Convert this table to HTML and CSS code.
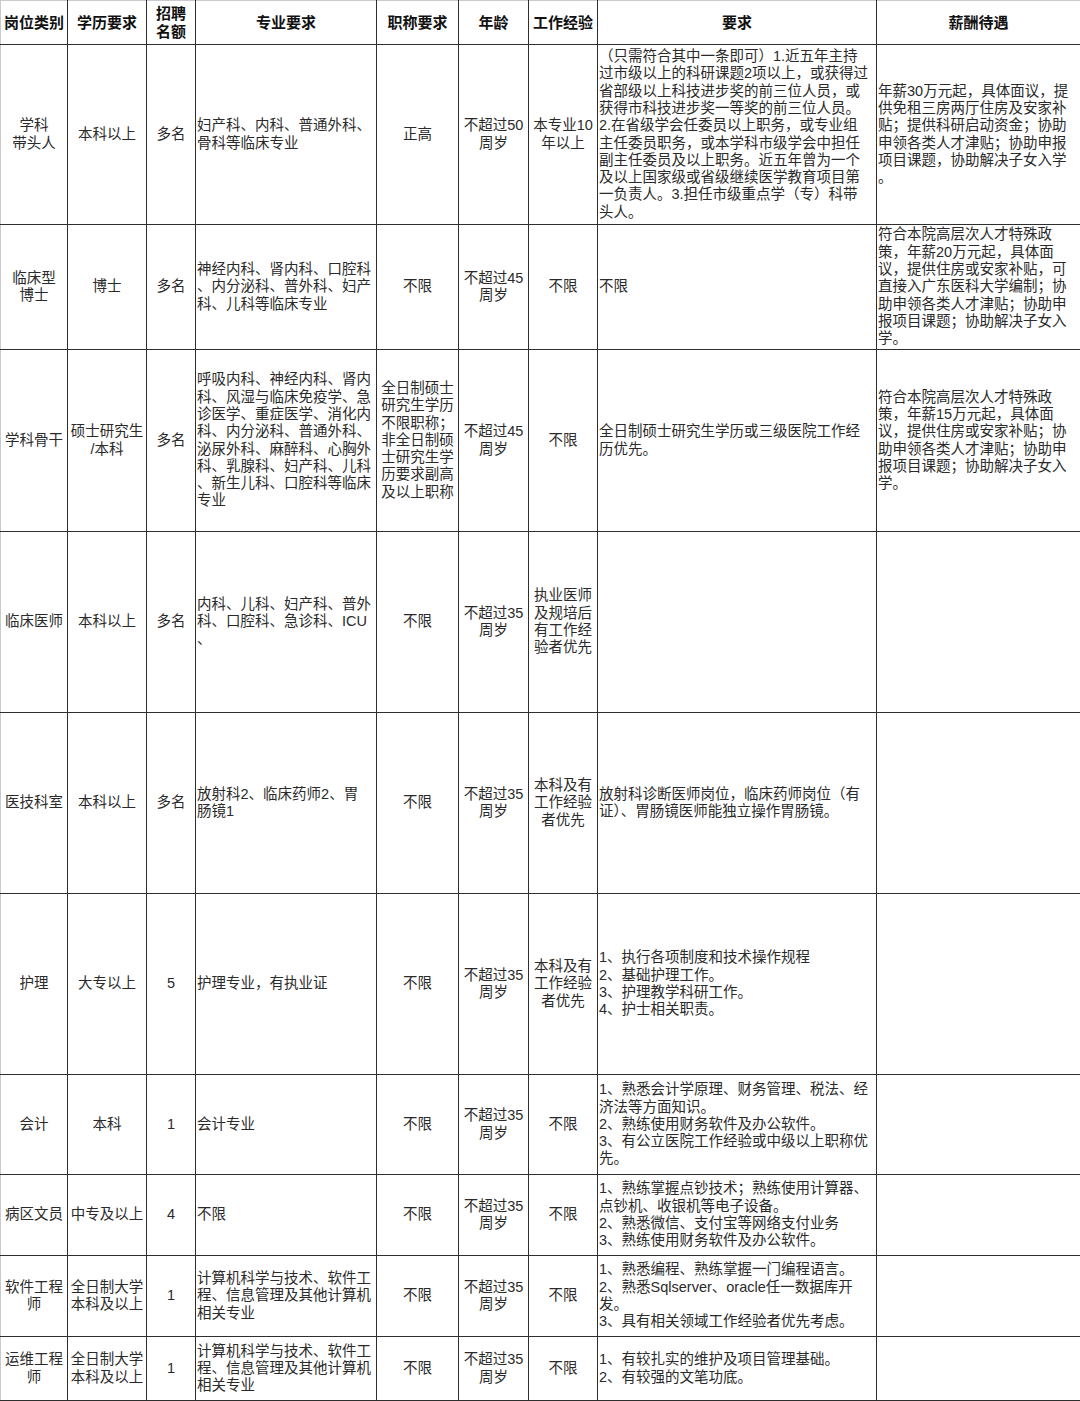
FILE: index.html
```html
<!DOCTYPE html>
<html lang="zh-CN">
<head>
<meta charset="utf-8">
<title>招聘岗位</title>
<link rel="stylesheet" href="styles.css">
</head>
<body>
<table class="jobs">
  <colgroup>
    <col class="c1"><col class="c2"><col class="c3"><col class="c4"><col class="c5"><col class="c6"><col class="c7"><col class="c8"><col class="c9">
  </colgroup>
  <thead>
    <tr class="h-head">
      <th>岗位类别</th><th>学历要求</th><th>招聘<br>名额</th><th>专业要求</th><th>职称要求</th><th>年龄</th><th>工作经验</th><th>要求</th><th>薪酬待遇</th>
    </tr>
  </thead>
  <tbody>
    <tr class="h-r1">
      <td class="ctr">学科<br>带头人</td>
      <td class="ctr">本科以上</td>
      <td class="ctr">多名</td>
      <td class="lft">妇产科、内科、普通外科、<br>骨科等临床专业</td>
      <td class="ctr">正高</td>
      <td class="ctr">不超过50<br>周岁</td>
      <td class="ctr">本专业10<br>年以上</td>
      <td class="lft">（只需符合其中一条即可）1.近五年主持<br>过市级以上的科研课题2项以上，或获得过<br>省部级以上科技进步奖的前三位人员，或<br>获得市科技进步奖一等奖的前三位人员。<br>2.在省级学会任委员以上职务，或专业组<br>主任委员职务，或本学科市级学会中担任<br>副主任委员及以上职务。近五年曾为一个<br>及以上国家级或省级继续医学教育项目第<br>一负责人。3.担任市级重点学（专）科带<br>头人。</td>
      <td class="lft">年薪30万元起，具体面议，提<br>供免租三房两厅住房及安家补<br>贴；提供科研启动资金；协助<br>申领各类人才津贴；协助申报<br>项目课题，协助解决子女入学<br>。</td>
    </tr>
    <tr class="h-r2">
      <td class="ctr">临床型<br>博士</td>
      <td class="ctr">博士</td>
      <td class="ctr">多名</td>
      <td class="lft">神经内科、肾内科、口腔科<br>、内分泌科、普外科、妇产<br>科、儿科等临床专业</td>
      <td class="ctr">不限</td>
      <td class="ctr">不超过45<br>周岁</td>
      <td class="ctr">不限</td>
      <td class="lft">不限</td>
      <td class="lft">符合本院高层次人才特殊政<br>策，年薪20万元起，具体面<br>议，提供住房或安家补贴，可<br>直接入广东医科大学编制；协<br>助申领各类人才津贴；协助申<br>报项目课题；协助解决子女入<br>学。</td>
    </tr>
    <tr class="h-r3">
      <td class="ctr">学科骨干</td>
      <td class="ctr">硕士研究生<br>/本科</td>
      <td class="ctr">多名</td>
      <td class="lft">呼吸内科、神经内科、肾内<br>科、风湿与临床免疫学、急<br>诊医学、重症医学、消化内<br>科、内分泌科、普通外科、<br>泌尿外科、麻醉科、心胸外<br>科、乳腺科、妇产科、儿科<br>、新生儿科、口腔科等临床<br>专业</td>
      <td class="ctr">全日制硕士<br>研究生学历<br>不限职称；<br>非全日制硕<br>士研究生学<br>历要求副高<br>及以上职称</td>
      <td class="ctr">不超过45<br>周岁</td>
      <td class="ctr">不限</td>
      <td class="lft">全日制硕士研究生学历或三级医院工作经<br>历优先。</td>
      <td class="lft">符合本院高层次人才特殊政<br>策，年薪15万元起，具体面<br>议，提供住房或安家补贴；协<br>助申领各类人才津贴；协助申<br>报项目课题；协助解决子女入<br>学。</td>
    </tr>
    <tr class="h-r4">
      <td class="ctr">临床医师</td>
      <td class="ctr">本科以上</td>
      <td class="ctr">多名</td>
      <td class="lft">内科、儿科、妇产科、普外<br>科、口腔科、急诊科、ICU<br>、</td>
      <td class="ctr">不限</td>
      <td class="ctr">不超过35<br>周岁</td>
      <td class="ctr">执业医师<br>及规培后<br>有工作经<br>验者优先</td>
      <td class="lft"></td>
      <td class="lft"></td>
    </tr>
    <tr class="h-r5">
      <td class="ctr">医技科室</td>
      <td class="ctr">本科以上</td>
      <td class="ctr">多名</td>
      <td class="lft">放射科2、临床药师2、胃<br>肠镜1</td>
      <td class="ctr">不限</td>
      <td class="ctr">不超过35<br>周岁</td>
      <td class="ctr">本科及有<br>工作经验<br>者优先</td>
      <td class="lft">放射科诊断医师岗位，临床药师岗位（有<br>证）、胃肠镜医师能独立操作胃肠镜。</td>
      <td class="lft"></td>
    </tr>
    <tr class="h-r6">
      <td class="ctr">护理</td>
      <td class="ctr">大专以上</td>
      <td class="ctr">5</td>
      <td class="lft">护理专业，有执业证</td>
      <td class="ctr">不限</td>
      <td class="ctr">不超过35<br>周岁</td>
      <td class="ctr">本科及有<br>工作经验<br>者优先</td>
      <td class="lft">1、执行各项制度和技术操作规程<br>2、基础护理工作。<br>3、护理教学科研工作。<br>4、护士相关职责。</td>
      <td class="lft"></td>
    </tr>
    <tr class="h-r7">
      <td class="ctr">会计</td>
      <td class="ctr">本科</td>
      <td class="ctr">1</td>
      <td class="lft">会计专业</td>
      <td class="ctr">不限</td>
      <td class="ctr">不超过35<br>周岁</td>
      <td class="ctr">不限</td>
      <td class="lft">1、熟悉会计学原理、财务管理、税法、经<br>济法等方面知识。<br>2、熟练使用财务软件及办公软件。<br>3、有公立医院工作经验或中级以上职称优<br>先。</td>
      <td class="lft"></td>
    </tr>
    <tr class="h-r8">
      <td class="ctr">病区文员</td>
      <td class="ctr">中专及以上</td>
      <td class="ctr">4</td>
      <td class="lft">不限</td>
      <td class="ctr">不限</td>
      <td class="ctr">不超过35<br>周岁</td>
      <td class="ctr">不限</td>
      <td class="lft">1、熟练掌握点钞技术；熟练使用计算器、<br>点钞机、收银机等电子设备。<br>2、熟悉微信、支付宝等网络支付业务<br>3、熟练使用财务软件及办公软件。</td>
      <td class="lft"></td>
    </tr>
    <tr class="h-r9">
      <td class="ctr">软件工程<br>师</td>
      <td class="ctr">全日制大学<br>本科及以上</td>
      <td class="ctr">1</td>
      <td class="lft">计算机科学与技术、软件工<br>程、信息管理及其他计算机<br>相关专业</td>
      <td class="ctr">不限</td>
      <td class="ctr">不超过35<br>周岁</td>
      <td class="ctr">不限</td>
      <td class="lft">1、熟悉编程、熟练掌握一门编程语言。<br>2、熟悉Sqlserver、oracle任一数据库开<br>发。<br>3、具有相关领域工作经验者优先考虑。</td>
      <td class="lft"></td>
    </tr>
    <tr class="h-r10">
      <td class="ctr">运维工程<br>师</td>
      <td class="ctr">全日制大学<br>本科及以上</td>
      <td class="ctr">1</td>
      <td class="lft">计算机科学与技术、软件工<br>程、信息管理及其他计算机<br>相关专业</td>
      <td class="ctr">不限</td>
      <td class="ctr">不超过35<br>周岁</td>
      <td class="ctr">不限</td>
      <td class="lft">1、有较扎实的维护及项目管理基础。<br>2、有较强的文笔功底。</td>
      <td class="lft"></td>
    </tr>
  </tbody>
</table>
</body>
</html>
```

FILE: styles.css
```css
html, body {
  margin: 0;
  padding: 0;
  background: #ffffff;
}

.jobs {
  width: 1080px;
  table-layout: fixed;
  border-collapse: collapse;
  font-family: "Liberation Sans", "Noto Sans CJK SC", sans-serif;
  font-size: 14.5px;
  line-height: 17.3px;
  color: #2a2a2a;
  border-top: 1px solid #c9c9cf;
  border-left: 1px solid #c9c9cf;
  border-right: 1px solid #8a8a8a;
  border-bottom: 1px solid #222;
}

.c1 { width: 67px; }
.c2 { width: 79px; }
.c3 { width: 49px; }
.c4 { width: 181px; }
.c5 { width: 82px; }
.c6 { width: 70px; }
.c7 { width: 69px; }
.c8 { width: 279px; }
.c9 { width: 204px; }

.jobs th,
.jobs td {
  border: 1px solid #2e2e2e;
  padding: 0 1px;
  vertical-align: middle;
  overflow: hidden;
}

.jobs thead th {
  border-top-color: #c9c9cf;
  font-weight: 700;
  font-size: 15px;
  line-height: 18px;
  color: #111;
  text-align: center;
  white-space: nowrap;
}

.jobs tr > :first-child {
  border-left-color: #c9c9cf;
}

.jobs tr > :last-child {
  border-right-color: #8a8a8a;
}

.ctr {
  text-align: center;
  white-space: nowrap;
}

.lft {
  text-align: left;
  white-space: nowrap;
  padding-left: 2px;
}

.h-head { height: 44px; }
.h-r1 { height: 180px; }
.h-r2 { height: 125px; }
.h-r3 { height: 182px; }
.h-r4 { height: 181px; }
.h-r5 { height: 181px; }
.h-r6 { height: 181px; }
.h-r7 { height: 100px; }
.h-r8 { height: 81px; }
.h-r9 { height: 81px; }
.h-r10 { height: 64px; }
```
